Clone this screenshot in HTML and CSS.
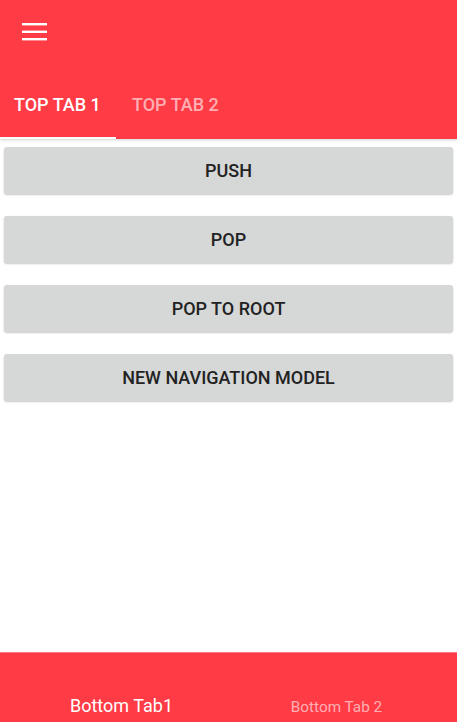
FILE: index.html
```html
<!DOCTYPE html>
<html>
<head>
<meta charset="utf-8">
<link rel="stylesheet" href="styles.css">
</head>
<body>
<div class="app">
  <header class="header">
    <div class="toolbar">
      <svg class="menu" width="26" height="20" viewBox="0 0 26 20">
        <rect x="0" y="1" width="25" height="2.4" fill="#fff"/>
        <rect x="0" y="8.6" width="25" height="2.4" fill="#fff"/>
        <rect x="0" y="16" width="25" height="2.4" fill="#fff"/>
      </svg>
    </div>
    <nav class="tabs">
      <div class="tab active">TOP TAB 1</div>
      <div class="tab">TOP TAB 2</div>
    </nav>
  </header>
  <main class="content">
    <button class="btn">PUSH</button>
    <button class="btn">POP</button>
    <button class="btn">POP TO ROOT</button>
    <button class="btn">NEW NAVIGATION MODEL</button>
  </main>
  <footer class="bottom">
    <div class="btab active">Bottom Tab1</div>
    <div class="btab">Bottom Tab 2</div>
  </footer>
</div>
</body>
</html>
```

FILE: styles.css
```css
* { box-sizing: border-box; }
html, body { margin: 0; padding: 0; }
body {
  width: 457px;
  height: 722px;
  overflow: hidden;
  font-family: Roboto, "Liberation Sans", sans-serif;
  background: #fff;
}
.app {
  display: flex;
  flex-direction: column;
  height: 722px;
}
.header {
  background: #ff3b46;
  height: 139px;
  display: flex;
  flex-direction: column;
  position: relative;
  z-index: 1;
  box-shadow: 0 1px 3px rgba(0,0,0,0.18);
}
.toolbar {
  height: 83px;
  padding: 22px 0 0 22px;
}
.menu { display: block; }
.tabs {
  display: flex;
  height: 56px;
}
.tab {
  color: rgba(255,255,255,0.6);
  font-weight: 500;
  font-size: 18px;
  padding: 11px 14px 0;
  height: 100%;
  border-bottom: 2px solid transparent;
}
.tab.active {
  color: #fff;
  width: 116px;
  border-bottom-color: #fff;
}
.tab:not(.active) {
  padding-left: 16px;
}
.content {
  flex: 1;
  display: flex;
  flex-direction: column;
  gap: 22px;
  padding: 8px 3px 0 3px;
}
.btn {
  height: 47px;
  border: none;
  border-radius: 3px;
  background: #d6d7d7;
  color: #222;
  font-family: Roboto, "Liberation Sans", sans-serif;
  font-weight: 500;
  font-size: 18px;
  box-shadow: 0 1px 2px rgba(0,0,0,0.22);
  margin: 0 1px;
  padding: 0;
}
.bottom {
  height: 70px;
  background: #ff3b46;
  border-top: 1px solid #ff7a80;
  display: flex;
  align-items: flex-end;
  padding-bottom: 6px;
}
.btab {
  flex: 1;
  text-align: center;
  color: rgba(255,255,255,0.6);
  font-size: 15.3px;
}
.btab.active {
  color: #fff;
  font-size: 18px;
  padding-left: 14px;
}
.btab:not(.active) {
  padding-right: 13px;
}
```
